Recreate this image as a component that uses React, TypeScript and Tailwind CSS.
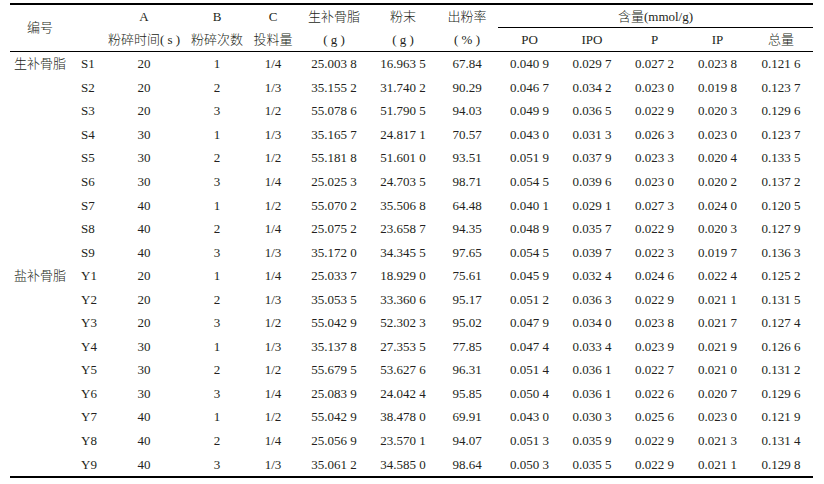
const rows: string[][] = [
  ['生补骨脂', 'S1', '20', '1', '1/4', '25.003 8', '16.963 5', '67.84', '0.040 9', '0.029 7', '0.027 2', '0.023 8', '0.121 6'],
  ['', 'S2', '20', '2', '1/3', '35.155 2', '31.740 2', '90.29', '0.046 7', '0.034 2', '0.023 0', '0.019 8', '0.123 7'],
  ['', 'S3', '20', '3', '1/2', '55.078 6', '51.790 5', '94.03', '0.049 9', '0.036 5', '0.022 9', '0.020 3', '0.129 6'],
  ['', 'S4', '30', '1', '1/3', '35.165 7', '24.817 1', '70.57', '0.043 0', '0.031 3', '0.026 3', '0.023 0', '0.123 7'],
  ['', 'S5', '30', '2', '1/2', '55.181 8', '51.601 0', '93.51', '0.051 9', '0.037 9', '0.023 3', '0.020 4', '0.133 5'],
  ['', 'S6', '30', '3', '1/4', '25.025 3', '24.703 5', '98.71', '0.054 5', '0.039 6', '0.023 0', '0.020 2', '0.137 2'],
  ['', 'S7', '40', '1', '1/2', '55.070 2', '35.506 8', '64.48', '0.040 1', '0.029 1', '0.027 3', '0.024 0', '0.120 5'],
  ['', 'S8', '40', '2', '1/4', '25.075 2', '23.658 7', '94.35', '0.048 9', '0.035 7', '0.022 9', '0.020 3', '0.127 9'],
  ['', 'S9', '40', '3', '1/3', '35.172 0', '34.345 5', '97.65', '0.054 5', '0.039 7', '0.022 3', '0.019 7', '0.136 3'],
  ['盐补骨脂', 'Y1', '20', '1', '1/4', '25.033 7', '18.929 0', '75.61', '0.045 9', '0.032 4', '0.024 6', '0.022 4', '0.125 2'],
  ['', 'Y2', '20', '2', '1/3', '35.053 5', '33.360 6', '95.17', '0.051 2', '0.036 3', '0.022 9', '0.021 1', '0.131 5'],
  ['', 'Y3', '20', '3', '1/2', '55.042 9', '52.302 3', '95.02', '0.047 9', '0.034 0', '0.023 8', '0.021 7', '0.127 4'],
  ['', 'Y4', '30', '1', '1/3', '35.137 8', '27.353 5', '77.85', '0.047 4', '0.033 4', '0.023 9', '0.021 9', '0.126 6'],
  ['', 'Y5', '30', '2', '1/2', '55.679 5', '53.627 6', '96.31', '0.051 4', '0.036 1', '0.022 7', '0.021 0', '0.131 2'],
  ['', 'Y6', '30', '3', '1/4', '25.083 9', '24.042 4', '95.85', '0.050 4', '0.036 1', '0.022 6', '0.020 7', '0.129 6'],
  ['', 'Y7', '40', '1', '1/2', '55.042 9', '38.478 0', '69.91', '0.043 0', '0.030 3', '0.025 6', '0.023 0', '0.121 9'],
  ['', 'Y8', '40', '2', '1/4', '25.056 9', '23.570 1', '94.07', '0.051 3', '0.035 9', '0.022 9', '0.021 3', '0.131 4'],
  ['', 'Y9', '40', '3', '1/3', '35.061 2', '34.585 0', '98.64', '0.050 3', '0.035 5', '0.022 9', '0.021 1', '0.129 8'],
]

const cols = 'grid grid-cols-[65px_27px_84px_62px_50px_72px_66px_62px_63px_62px_63px_63px_64px]'
const cell = 'flex items-center justify-center whitespace-nowrap'

export default function App() {
  return (
    <div className="w-[824px] h-[484px] bg-white pt-[3px] pl-[10px] text-[13px] leading-none text-[#231f20] font-light font-['Liberation_Serif','Noto_Sans_CJK_SC',serif]">
      <div className="w-[803px] border-t-2 border-b-2 border-black">
        {/* header */}
        <div className={`${cols} grid-rows-[22px_1px_23px] border-b border-black`}>
          <div className="col-span-2 row-span-3 flex items-center pl-[17px] pb-[2px]">编号</div>
          <div className={cell}>A</div>
          <div className={cell}>B</div>
          <div className={cell}>C</div>
          <div className={cell}>生补骨脂</div>
          <div className={cell}>粉末</div>
          <div className={cell}>出粉率</div>
          <div className={`${cell} col-span-5`}>含量(mmol/g)</div>
          <div className="col-span-6" />
          <div className="col-span-5 bg-black" />
          <div className={cell}>粉碎时间( s )</div>
          <div className={cell}>粉碎次数</div>
          <div className={cell}>投料量</div>
          <div className={cell}>( g )</div>
          <div className={cell}>( g )</div>
          <div className={cell}>( % )</div>
          <div className={cell}>PO</div>
          <div className={cell}>IPO</div>
          <div className={cell}>P</div>
          <div className={cell}>IP</div>
          <div className={cell}>总量</div>
        </div>
        {/* body */}
        {rows.map((r) => (
          <div key={r[1]} className={`${cols} h-[23.55px]`}>
            <div className="flex items-center pl-[4px] whitespace-nowrap">{r[0]}</div>
            <div className="flex items-center pl-[6px]">{r[1]}</div>
            {r.slice(2).map((v, i) => (
              <div key={i} className={cell}>{v}</div>
            ))}
          </div>
        ))}
      </div>
    </div>
  )
}
